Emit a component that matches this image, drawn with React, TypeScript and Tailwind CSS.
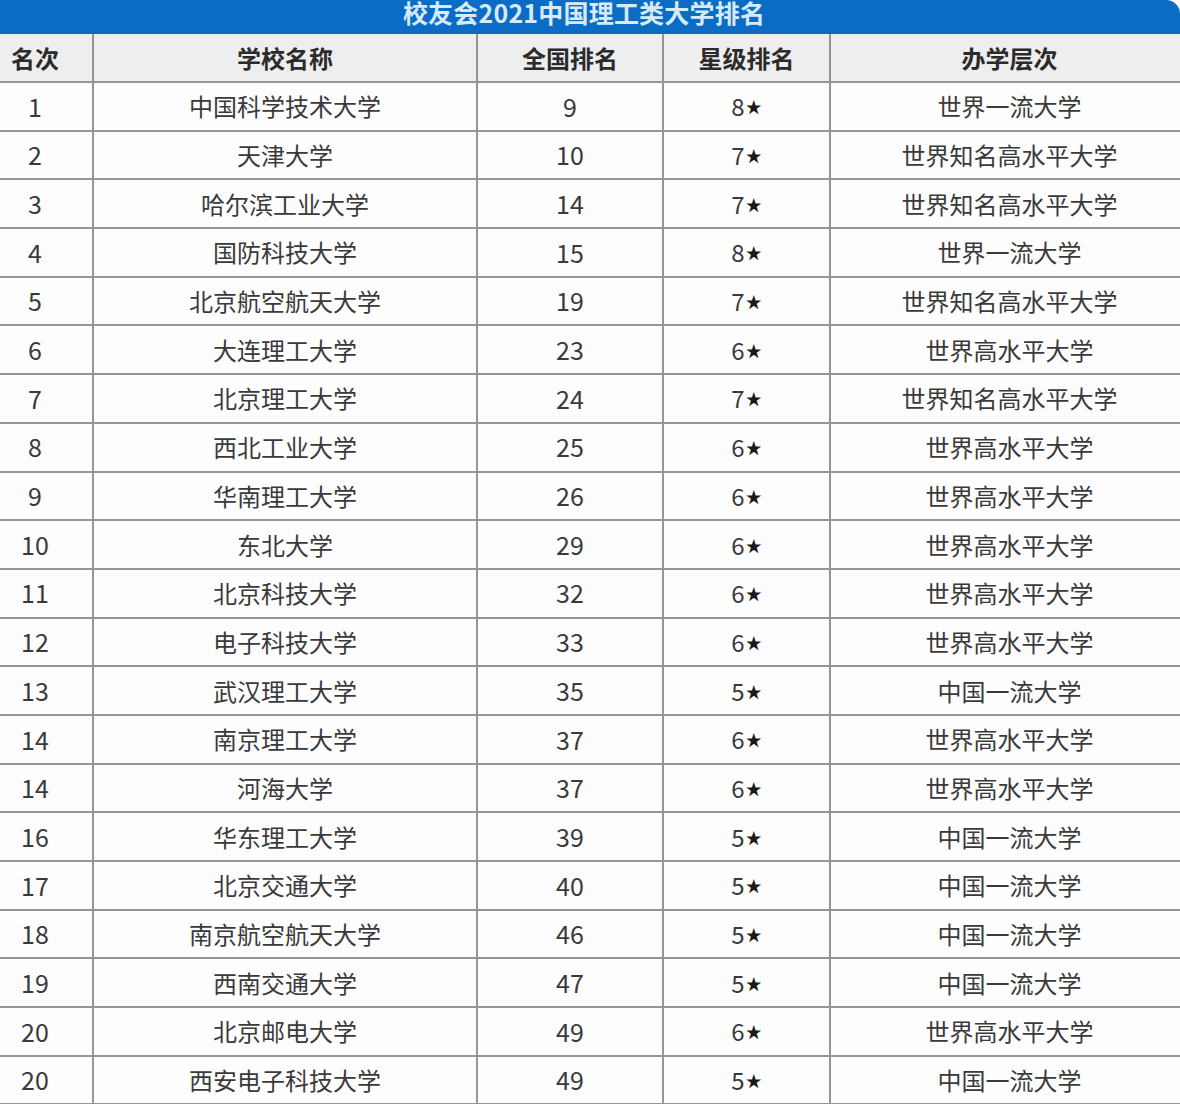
import React from "react";

const rows: [string, string, string, string, string][] = [
  ["1", "中国科学技术大学", "9", "8", "世界一流大学"],
  ["2", "天津大学", "10", "7", "世界知名高水平大学"],
  ["3", "哈尔滨工业大学", "14", "7", "世界知名高水平大学"],
  ["4", "国防科技大学", "15", "8", "世界一流大学"],
  ["5", "北京航空航天大学", "19", "7", "世界知名高水平大学"],
  ["6", "大连理工大学", "23", "6", "世界高水平大学"],
  ["7", "北京理工大学", "24", "7", "世界知名高水平大学"],
  ["8", "西北工业大学", "25", "6", "世界高水平大学"],
  ["9", "华南理工大学", "26", "6", "世界高水平大学"],
  ["10", "东北大学", "29", "6", "世界高水平大学"],
  ["11", "北京科技大学", "32", "6", "世界高水平大学"],
  ["12", "电子科技大学", "33", "6", "世界高水平大学"],
  ["13", "武汉理工大学", "35", "5", "中国一流大学"],
  ["14", "南京理工大学", "37", "6", "世界高水平大学"],
  ["14", "河海大学", "37", "6", "世界高水平大学"],
  ["16", "华东理工大学", "39", "5", "中国一流大学"],
  ["17", "北京交通大学", "40", "5", "中国一流大学"],
  ["18", "南京航空航天大学", "46", "5", "中国一流大学"],
  ["19", "西南交通大学", "47", "5", "中国一流大学"],
  ["20", "北京邮电大学", "49", "6", "世界高水平大学"],
  ["20", "西安电子科技大学", "49", "5", "中国一流大学"],
];

const grid = "grid grid-cols-[94px_384px_186px_167px_1fr]";

export default function App() {
  return (
    <div
      className="w-[1180px] h-[1104px] overflow-hidden bg-white"
      style={{ fontFamily: '"Noto Sans CJK SC", "Noto Sans", sans-serif' }}
    >
      <div className="h-[34px] bg-[#0b6cc6] rounded-tr-[14px] flex items-start justify-center overflow-hidden">
        <div className="text-[25px] font-bold leading-none text-[#d6eafa] pr-[12px] tracking-[0.2px]">
          校友会2021中国理工类大学排名
        </div>
      </div>
      <div className={`${grid} h-[49px] bg-[#eeeeee] border-b-2 border-[#959595]`}>
        {["名次", "学校名称", "全国排名", "星级排名", "办学层次"].map((h, i) => (
          <div
            key={h}
            className={`flex items-center justify-center text-[24px] font-bold text-[#2b2b2b] ${
              i < 4 ? "border-r-2 border-[#959595]" : ""
            } ${i === 0 ? "pr-[22px]" : ""} ${i === 4 ? "pl-[8px]" : ""}`}
          >
            {h}
          </div>
        ))}
      </div>
      {rows.map((r, idx) => (
        <div
          key={idx}
          className={`${grid} h-[48.7px] border-b-2 border-[#959595] bg-[#fdfdfd] text-[#3a3a3a]`}
        >
          <div className="flex items-center justify-center border-r-2 border-[#959595] text-[25px] pr-[22px]">
            {r[0]}
          </div>
          <div className="flex items-center justify-center border-r-2 border-[#959595] text-[24px]">
            {r[1]}
          </div>
          <div className="flex items-center justify-center border-r-2 border-[#959595] text-[25px]">
            {r[2]}
          </div>
          <div className="flex items-center justify-center border-r-2 border-[#959595] text-[24px]">
            <span>{r[3]}</span>
            <span className="text-[16px] text-[#1a1a1a] ml-[1px]">★</span>
          </div>
          <div className="flex items-center justify-center text-[24px] pl-[8px]">{r[4]}</div>
        </div>
      ))}
    </div>
  );
}
